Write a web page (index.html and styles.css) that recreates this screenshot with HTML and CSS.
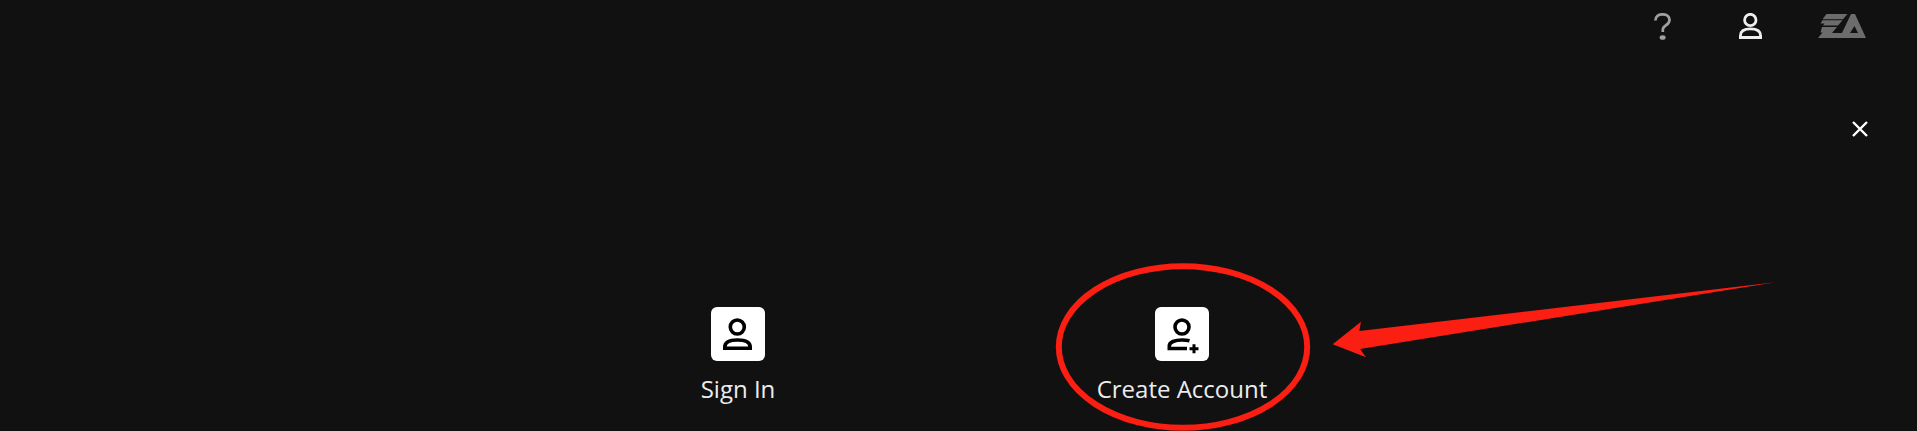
FILE: index.html
```html
<!DOCTYPE html>
<html lang="en">
<head>
<meta charset="utf-8">
<title>Sign in</title>
<link rel="stylesheet" href="styles.css">
</head>
<body>
<div class="page">
  <header class="topbar">
    <svg class="icon-help" viewBox="0 0 17 27" aria-hidden="true">
      <path d="M1.400 7.500C1.500 3.400 4.600 1.300 8.500 1.300c4.200 0 7 2.400 7 5.600 0 2.800-1.600 4.100-3.700 5.500-1.900 1.300-3 2.300-3 4.400v2.200" fill="none" stroke="#a0a0a0" stroke-width="2.700"/>
      <ellipse cx="8.600" cy="24.500" rx="3" ry="2.300" fill="#a0a0a0"/>
    </svg>
    <svg class="icon-user" viewBox="0 0 23 26" aria-hidden="true">
      <circle cx="11.300" cy="7" r="5.700" fill="none" stroke="#efefef" stroke-width="2.800"/>
      <path d="M1.400 24.500v-1.800c0-5 4.500-6.900 10.100-6.900s10.100 1.900 10.100 6.900v1.800z" fill="none" stroke="#efefef" stroke-width="2.800"/>
    </svg>
    <svg class="icon-ea" viewBox="0 0 48 24" aria-hidden="true">
      <path fill="#6c6c6c" fill-rule="evenodd" d="M8.500 0H29.500L25 5.300H4.500zM4.500 6.200H24.500L20 11.500H5L6.500 9.500H2.500zM33 0H37L48 24H0L4.500 18.500H2.500L4 13H19L14 19H24zM32 19H40L36.500 12z"/>
    </svg>
  </header>
  <div class="closebar">
    <svg class="icon-close" viewBox="0 0 16 16" aria-hidden="true">
      <path d="M1 1L15 15M15 1L1 15" stroke="#fff" stroke-width="2.400"/>
    </svg>
  </div>
  <nav class="actions">
    <a class="action">
      <span class="tile">
        <svg class="tile-icon" viewBox="0 0 54 54" aria-hidden="true">
          <circle cx="26.300" cy="20" r="7" fill="none" stroke="#000" stroke-width="3.600"/>
          <path d="M13.800 41.300v-1.300c0-5 5.700-7 12.700-7s12.700 2 12.700 7v1.300z" fill="none" stroke="#000" stroke-width="3.600"/>
        </svg>
      </span>
      <span class="label">Sign In</span>
    </a>
    <a class="action">
      <span class="tile">
        <svg class="tile-icon" viewBox="0 0 54 54" aria-hidden="true">
          <circle cx="27" cy="20" r="7" fill="none" stroke="#000" stroke-width="3.600"/>
          <path d="M34.500 33.800C32 33.200 30 33 27 33c-7 0-12.700 2-12.700 6v2.500h17.700" fill="none" stroke="#000" stroke-width="3.600"/>
          <path d="M39 37.300v9M34.500 41.800h9" fill="none" stroke="#000" stroke-width="3"/>
        </svg>
      </span>
      <span class="label">Create Account</span>
    </a>
  </nav>
  <svg class="markup" viewBox="0 0 1917 431" aria-hidden="true">
    <ellipse cx="1183" cy="347" rx="124.200" ry="80.800" fill="none" stroke="#fb1e12" stroke-width="6"/>
    <polygon fill="#fb1e12" points="1332.700,344.300 1361,321.700 1359.300,331 1775.500,282.200 1360,349 1366,357.300"/>
  </svg>
</div>
</body>
</html>
```
FILE: styles.css
```css
html, body {
  margin: 0;
  padding: 0;
  height: 100%;
  background: #111111;
}
.page {
  position: relative;
  height: 431px;
  overflow: hidden;
  background: #111111;
  font-family: "Open Sans", sans-serif;
}
.topbar {
  display: flex;
  justify-content: flex-end;
  align-items: flex-start;
  padding: 13px 51px 0 0;
  height: 27px;
}
.icon-help {
  width: 17px;
  height: 27px;
}
.icon-user {
  width: 23px;
  height: 26px;
  margin-left: 68px;
}
.icon-ea {
  width: 48px;
  height: 24px;
  margin-left: 56px;
  margin-top: 1px;
}
.closebar {
  display: flex;
  justify-content: flex-end;
  padding: 81px 49px 0 0;
}
.icon-close {
  width: 16px;
  height: 16px;
  display: block;
}
.actions {
  display: flex;
  justify-content: center;
  gap: 222px;
  margin-top: 170px;
  padding-left: 3px;
}
.action {
  width: 222px;
  display: flex;
  flex-direction: column;
  align-items: center;
  gap: 13px;
}
.tile {
  width: 54px;
  height: 54px;
  border-radius: 6px;
  background: #fff;
  display: block;
}
.tile-icon {
  width: 54px;
  height: 54px;
  display: block;
}
.label {
  color: #ececec;
  font-size: 24px;
  line-height: 30px;
  white-space: nowrap;
}
.markup {
  position: absolute;
  left: 0;
  top: 0;
  width: 1917px;
  height: 431px;
  pointer-events: none;
}
```
